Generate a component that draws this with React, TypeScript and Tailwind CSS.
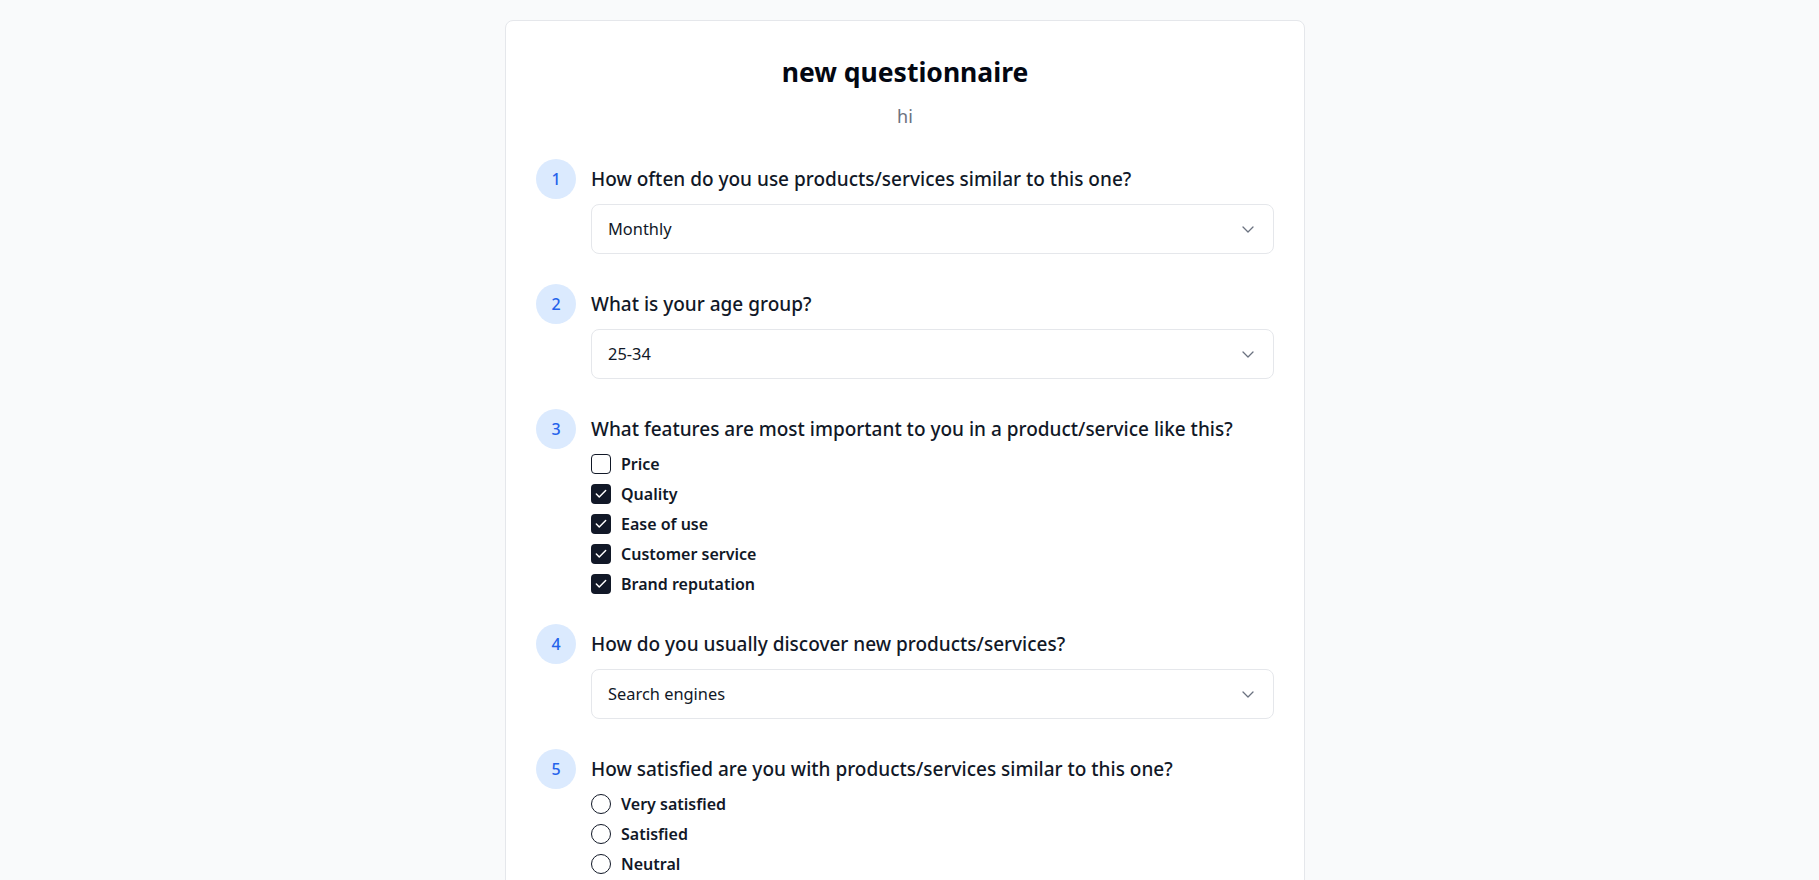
import React from "react";

function Chevron() {
  return (
    <svg width="12" height="7" viewBox="0 0 12 7" fill="none" className="shrink-0">
      <polyline points="1,1 6,6 11,1" stroke="#6b7280" strokeWidth="1.3" strokeLinecap="round" strokeLinejoin="round" />
    </svg>
  );
}

function Select({ value }: { value: string }) {
  return (
    <div className="mt-[5px] flex h-[50px] items-center justify-between rounded-lg border border-[#e5e7eb] bg-white pl-4 pr-[19px]">
      <span className="text-[16.4px] text-[#111827]">{value}</span>
      <Chevron />
    </div>
  );
}

function Checkbox({ label, checked }: { label: string; checked: boolean }) {
  return (
    <div className="flex h-6 items-center gap-[10px]">
      {checked ? (
        <span className="flex h-5 w-5 items-center justify-center rounded-[4px] bg-[#111827]">
          <svg width="14" height="14" viewBox="0 0 24 24" fill="none">
            <polyline points="20 6 9 17 4 12" stroke="white" strokeWidth="2.5" strokeLinecap="round" strokeLinejoin="round" />
          </svg>
        </span>
      ) : (
        <span className="h-5 w-5 rounded-[4px] border-[1.5px] border-[#111827] bg-white" />
      )}
      <span className="text-[16px] font-semibold text-[#111827]">{label}</span>
    </div>
  );
}

function Radio({ label }: { label: string }) {
  return (
    <div className="flex h-6 items-center gap-[10px]">
      <span className="h-5 w-5 rounded-full border-[1.5px] border-[#111827] bg-white" />
      <span className="text-[16px] font-semibold text-[#111827]">{label}</span>
    </div>
  );
}

function Question({ n, text, children }: { n: number; text: string; children: React.ReactNode }) {
  return (
    <div className="flex items-start gap-[15px]">
      <div className="flex h-10 w-10 shrink-0 items-center justify-center rounded-full bg-[#dbeafe] text-[16px] font-medium text-[#2563eb]">
        {n}
      </div>
      <div className="min-w-0 flex-1">
        <div className="flex h-10 items-center text-[19px] font-medium text-[#111827]">{text}</div>
        {children}
      </div>
    </div>
  );
}

export default function App() {
  return (
    <div className="min-h-screen bg-[#f9fafb] pt-5 pb-10 pr-[9px]" style={{ fontFamily: '"Noto Sans", "Open Sans", sans-serif' }}>
      <div className="mx-auto w-[800px] rounded-lg border border-[#e5e7eb] bg-white px-[30px] pt-[31px] pb-10">
        <h1 className="text-center text-[26.5px] font-bold leading-10 text-[#030712]">new questionnaire</h1>
        <p className="mt-[10px] text-center text-[18px] leading-7 text-[#6b7280]">hi</p>
        <div className="mt-[29px] flex flex-col gap-[30px]">
          <Question n={1} text="How often do you use products/services similar to this one?">
            <Select value="Monthly" />
          </Question>
          <Question n={2} text="What is your age group?">
            <Select value="25-34" />
          </Question>
          <Question n={3} text="What features are most important to you in a product/service like this?">
            <div className="mt-[3px] mb-[-2px] flex flex-col gap-[6px]">
              <Checkbox label="Price" checked={false} />
              <Checkbox label="Quality" checked />
              <Checkbox label="Ease of use" checked />
              <Checkbox label="Customer service" checked />
              <Checkbox label="Brand reputation" checked />
            </div>
          </Question>
          <Question n={4} text="How do you usually discover new products/services?">
            <Select value="Search engines" />
          </Question>
          <Question n={5} text="How satisfied are you with products/services similar to this one?">
            <div className="mt-[3px] flex flex-col gap-[6px]">
              <Radio label="Very satisfied" />
              <Radio label="Satisfied" />
              <Radio label="Neutral" />
              <Radio label="Dissatisfied" />
              <Radio label="Very dissatisfied" />
            </div>
          </Question>
        </div>
      </div>
    </div>
  );
}
